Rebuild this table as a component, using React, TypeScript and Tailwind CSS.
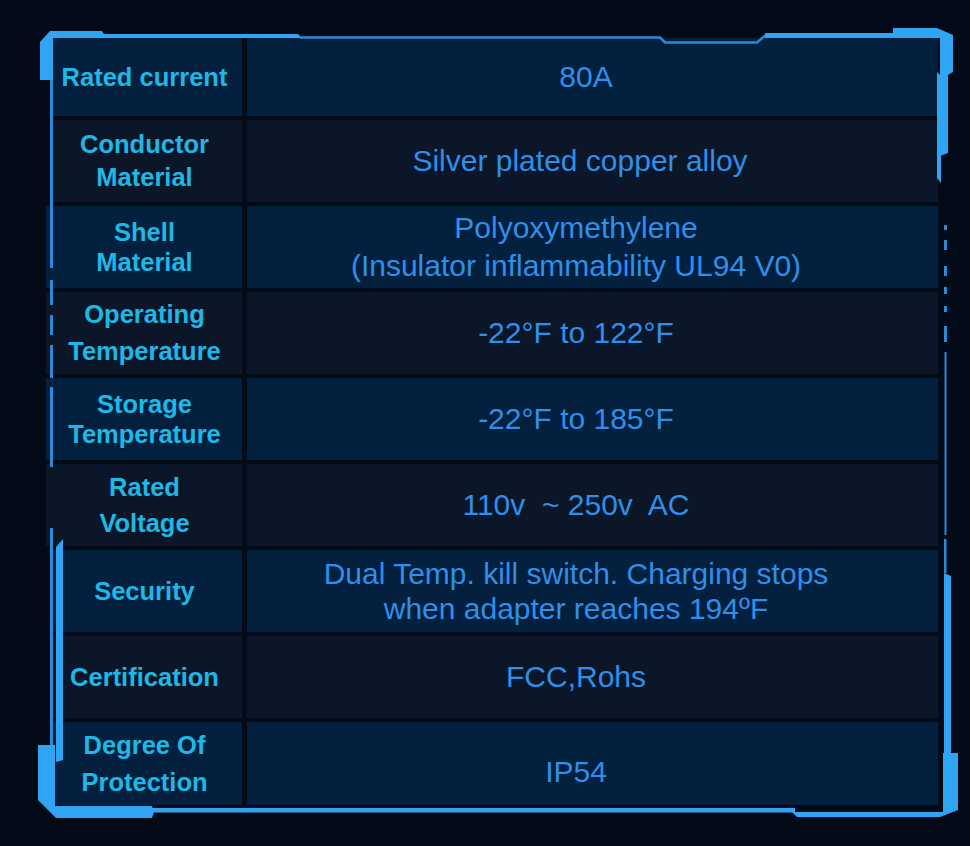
import React from "react";

type Row = {
  label: string[];
  value: string[];
  h: string;
  odd: boolean;
  lLead: string;
  vLead: string;
  vPad: string;
  wide?: boolean;
};

const rows: Row[] = [
  { label: ["Rated current"], value: ["80A"], h: "h-[78px]", odd: true, lLead: "leading-[30px]", vLead: "leading-[36px]", vPad: "pr-[13px]" },
  { label: ["Conductor", "Material"], value: ["Silver plated copper alloy"], h: "h-[82px]", odd: false, lLead: "leading-[33px]", vLead: "leading-[36px]", vPad: "pr-[25px]" },
  { label: ["Shell", "Material"], value: ["Polyoxymethylene", "(Insulator inflammability UL94 V0)"], h: "h-[82px]", odd: true, lLead: "leading-[30px]", vLead: "leading-[38px]", vPad: "pr-[33px]", wide: true },
  { label: ["Operating", "Temperature"], value: ["-22°F to 122°F"], h: "h-[82px]", odd: false, lLead: "leading-[37px]", vLead: "leading-[36px]", vPad: "pr-[33px]", wide: true },
  { label: ["Storage", "Temperature"], value: ["-22°F to 185°F"], h: "h-[82px]", odd: true, lLead: "leading-[30px]", vLead: "leading-[36px]", vPad: "pr-[33px]", wide: true },
  { label: ["Rated", "Voltage"], value: ["110v  ~ 250v  AC"], h: "h-[82px]", odd: false, lLead: "leading-[36px]", vLead: "leading-[36px]", vPad: "pr-[33px]", wide: true },
  { label: ["Security"], value: ["Dual Temp. kill switch. Charging stops", "when adapter reaches 194ºF"], h: "h-[82px]", odd: true, lLead: "leading-[30px]", vLead: "leading-[35px]", vPad: "pr-[33px]" },
  { label: ["Certification"], value: ["FCC,Rohs"], h: "h-[82px]", odd: false, lLead: "leading-[30px]", vLead: "leading-[36px]", vPad: "pr-[33px]" },
  { label: ["Degree Of", "Protection"], value: ["IP54"], h: "h-[83px]", odd: true, lLead: "leading-[37px]", vLead: "leading-[36px]", vPad: "pr-[33px] pt-[16px]" },
];

function Frame() {
  const c = "#2fa5f3";
  const d = "#2a8ad8";
  return (
    <svg
      className="absolute left-0 top-0 pointer-events-none"
      width="970"
      height="846"
      viewBox="0 0 970 846"
    >
      <polygon points="40,42 50,31 102,31 104,34 298,34 302,38 53,38 53,80 40,80" fill={c} />
      <path d="M300,37.5 L660,37.5 L665,42.5 L757,42.5 L766,35" stroke={d} strokeWidth="2.5" fill="none" />
      <polygon points="765,33 893,33 893,28 937,28 953,35 953,72 948,75 948,153 940,156 940,38 765,38" fill={c} />
      <polygon points="937,72 941,76 941,183 937,178" fill={c} />
      <rect x="944" y="225" width="3" height="5" fill={d} />
      <rect x="944" y="240" width="3" height="10" fill={d} />
      <rect x="944" y="266" width="3" height="10" fill={d} />
      <rect x="944" y="287" width="3" height="7" fill={d} />
      <rect x="944" y="306" width="3" height="6" fill={d} />
      <rect x="944" y="326" width="3" height="16" fill={d} />
      <rect x="944.5" y="352" width="2" height="183" fill={d} />
      <rect x="944" y="539" width="2.5" height="34" fill={d} />
      <polygon points="944,573 951,576 951,753 944,753" fill={c} />
      <polygon points="943,753 958,753 958,810 940,817 797,817 792,812 943,812" fill={c} />
      <rect x="53" y="808" width="742" height="4.5" fill={c} />
      <rect x="50" y="80" width="3" height="188" fill={d} />
      <rect x="50" y="280" width="3" height="25" fill={d} />
      <rect x="50" y="315" width="3" height="20" fill={d} />
      <rect x="50" y="345" width="3" height="33" fill={d} />
      <rect x="50" y="387" width="3" height="80" fill={d} />
      <rect x="50" y="528" width="3" height="229" fill={d} />
      <polygon points="56,547 63,539 63,760 56,762" fill={c} />
      <polygon points="38,745 55,745 55,806 152,806 154,812 152,818 56,818 38,800" fill={c} />
    </svg>
  );
}

export default function App() {
  return (
    <div className="relative w-[970px] h-[846px] overflow-hidden bg-[#040b18] font-['Liberation_Sans',Arial,sans-serif]">
      <div className="ml-[53px] pt-[38px] w-[885px] flex flex-col gap-[4px]">
        {rows.map((r, i) => (
          <div key={i} className={`flex gap-[5px] ${r.h}`}>
            <div
              className={`${r.wide ? "-ml-[7px] w-[196px] pl-[7px]" : "w-[189px]"} pr-[6px] flex flex-col items-center justify-center text-center font-bold text-[25.5px] text-[#1db8e6] ${r.lLead} ${r.odd ? "bg-[#03203f]" : "bg-[#0b1729]"}`}
            >
              {r.label.map((t, j) => (
                <span key={j}>{t}</span>
              ))}
            </div>
            <div
              className={`flex-1 flex flex-col items-center justify-center text-center text-[30px] text-[#2f8fe9] whitespace-pre ${r.vLead} ${r.vPad} ${r.odd ? "bg-[#03203f]" : "bg-[#0b1729]"}`}
            >
              {r.value.map((t, j) => (
                <span key={j}>{t}</span>
              ))}
            </div>
          </div>
        ))}
      </div>
      <Frame />
    </div>
  );
}
